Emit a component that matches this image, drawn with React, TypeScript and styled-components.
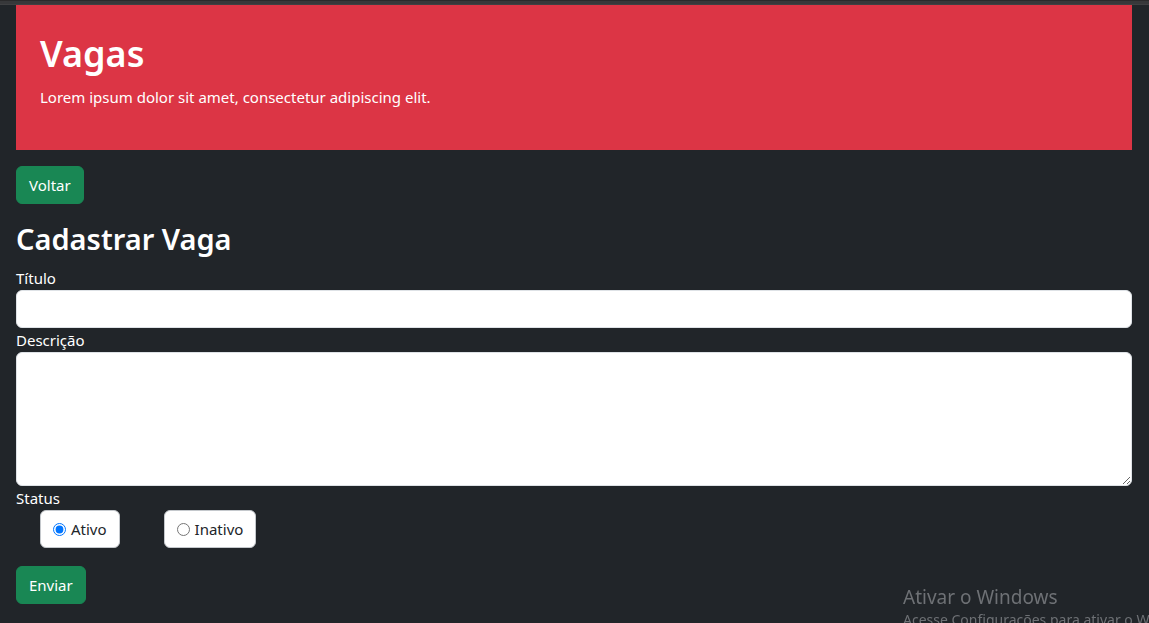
import React from "react";
import styled, { createGlobalStyle } from "styled-components";

const GlobalStyle = createGlobalStyle`
  html, body {
    margin: 0;
    padding: 0;
    background: #212529;
    color: #ffffff;
    font-family: "Noto Sans", "Open Sans", sans-serif;
    font-size: 16px;
    line-height: 1.5;
    overflow: hidden;
  }
  * { box-sizing: border-box; }
`;

const TopStrip = styled.div`
  height: 5px;
  background: #37383a;
  border-top: 1px solid #2a2a2b;
  border-bottom: 1px solid #3f4042;
`;

const Page = styled.div`
  padding: 0 17px 0 16px;
`;

const Hero = styled.header`
  background: #dc3545;
  padding: 26px 24px 25px;
  color: #fff;
`;

const HeroTitle = styled.h1`
  margin: 0 0 8px;
  font-size: 36px;
  font-weight: 600;
  line-height: 46px;
`;

const HeroText = styled.p`
  margin: 0 0 16px;
  font-size: 15px;
  line-height: 24px;
`;

const Button = styled.button`
  display: inline-block;
  background: #198754;
  color: #fff;
  border: 1px solid #198754;
  border-radius: 6px;
  padding: 6px 12px;
  font-family: inherit;
  font-size: 15px;
  line-height: 24px;
  cursor: pointer;
`;

const TopActions = styled.div`
  margin-top: 16px;
`;

const Form = styled.form`
  display: flex;
  flex-direction: column;
  align-items: stretch;
`;

const FormTitle = styled.h2`
  margin: 16px 0 8px;
  font-size: 29px;
  font-weight: 600;
  line-height: 38px;
`;

const Label = styled.label`
  display: block;
  font-size: 15px;
  line-height: 24px;
`;

const TextInput = styled.input`
  display: block;
  width: 100%;
  height: 38px;
  background: #fff;
  border: 1px solid #dee2e6;
  border-radius: 6px;
  padding: 6px 12px;
  font-family: inherit;
  font-size: 16px;
  outline: none;
`;

const TextArea = styled.textarea`
  display: block;
  width: 100%;
  height: 134px;
  background: #fff;
  border: 1px solid #dee2e6;
  border-radius: 6px;
  padding: 6px 12px;
  font-family: inherit;
  font-size: 16px;
  outline: none;
  resize: vertical;
`;

const RadioRow = styled.div`
  display: flex;
  gap: 44px;
  padding-left: 24px;
  margin-bottom: 18px;
`;

const RadioBox = styled.label`
  display: inline-flex;
  align-items: center;
  height: 38px;
  padding: 0 12px;
  background: #fff;
  color: #212529;
  border: 1px solid #c4c8cc;
  border-radius: 6px;
  font-size: 15px;
  line-height: 24px;
`;

const Radio = styled.input`
  width: 13px;
  height: 13px;
  margin: 0 5px 0 0;
`;

const Watermark = styled.div`
  position: fixed;
  left: 903px;
  top: 584px;
  color: #6e7175;
  white-space: nowrap;
  font-family: "Noto Sans", sans-serif;
  pointer-events: none;
`;

const WatermarkTitle = styled.div`
  font-size: 19px;
  line-height: 26px;
`;

const WatermarkText = styled.div`
  font-size: 14px;
  line-height: 20px;
`;

export default function App() {
  return (
    <>
      <GlobalStyle />
      <TopStrip />
      <Page>
        <Hero>
          <HeroTitle>Vagas</HeroTitle>
          <HeroText>Lorem ipsum dolor sit amet, consectetur adipiscing elit.</HeroText>
        </Hero>
        <TopActions>
          <Button type="button">Voltar</Button>
        </TopActions>
        <Form onSubmit={(e) => e.preventDefault()}>
          <FormTitle>Cadastrar Vaga</FormTitle>
          <Label htmlFor="titulo">Título</Label>
          <TextInput id="titulo" type="text" />
          <Label htmlFor="descricao">Descrição</Label>
          <TextArea id="descricao" rows={5} />
          <Label as="div">Status</Label>
          <RadioRow>
            <RadioBox>
              <Radio type="radio" name="status" value="s" defaultChecked />
              Ativo
            </RadioBox>
            <RadioBox>
              <Radio type="radio" name="status" value="n" />
              Inativo
            </RadioBox>
          </RadioRow>
          <div>
            <Button type="submit">Enviar</Button>
          </div>
        </Form>
      </Page>
      <Watermark>
        <WatermarkTitle>Ativar o Windows</WatermarkTitle>
        <WatermarkText>Acesse Configurações para ativar o Windows.</WatermarkText>
      </Watermark>
    </>
  );
}
